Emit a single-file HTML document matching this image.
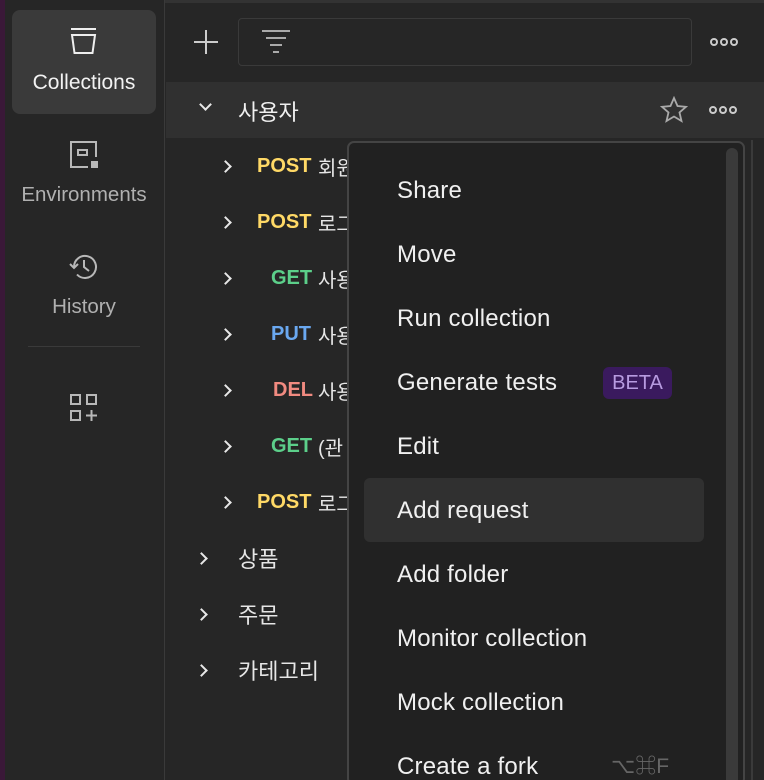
<!DOCTYPE html><html><head><meta charset="utf-8"><style>
*{margin:0;padding:0;box-sizing:border-box}
html{width:764px;height:780px;overflow:hidden}
body{width:764px;height:780px;overflow:hidden;background:#262626;font-family:"Liberation Sans","Noto Sans CJK KR",sans-serif;color:#e6e6e6;position:relative}
.a{position:absolute}
.strip{left:0;top:0;width:5px;height:780px;background:#3a1838}
.side{left:5px;top:0;width:160px;height:780px;background:#262626;border-right:1px solid #3a3a3a}
.nav{left:12px;width:144px;text-align:center;font-size:20.5px;color:#b0b0b0}
.row{left:166px;width:598px;height:56px;font-size:20px;display:flex;align-items:center}
.chev{position:absolute;width:9px;height:9px;border-right:2px solid #e8e8e8;border-bottom:2px solid #e8e8e8;transform:rotate(-45deg)}
.m{font-weight:bold;position:absolute}
.menu{left:347px;top:141px;width:398px;height:645px;background:#212121;border:2px solid #444;border-radius:7px;overflow:hidden}
.mi{position:absolute;left:48px;font-size:24px;letter-spacing:0.2px;color:#f0f0f0;height:64px;line-height:64px}
.dots{position:absolute;display:flex;gap:2px}
.dots i{width:8px;height:8px;border:2px solid #ccc;border-radius:50%}
</style></head><body>
<div class="a" style="left:0;top:0;width:764px;height:3px;background:#333"></div>
<div class="a strip"></div>
<div class="a side"></div>
<div class="a" style="left:12px;top:10px;width:144px;height:104px;background:#3a3a3a;border-radius:8px"></div>
<svg class="a" style="left:68px;top:26px" width="32" height="32" viewBox="0 0 32 32" fill="none" stroke="#eee" stroke-width="2"><path d="M3 3h25M4 9h23l-2.5 18h-18z"/></svg>
<div class="a nav" style="top:71px;color:#f2f2f2;font-size:21px">Collections</div>
<svg class="a" style="left:68px;top:139px" width="32" height="32" viewBox="0 0 32 32" fill="none" stroke="#b8b8b8" stroke-width="2"><path d="M28 18V3H3v25h17"/><rect x="10" y="11" width="9" height="5"/><rect x="24" y="23" width="5" height="5" fill="#b8b8b8"/></svg>
<div class="a nav" style="top:183px">Environments</div>
<svg class="a" style="left:68px;top:251px" width="32" height="32" viewBox="0 0 32 32" fill="none" stroke="#b8b8b8" stroke-width="2"><path d="M6 16a11 11 0 1 1 3 7.5"/><path d="M2 13l4 4 4-4"/><path d="M16 9v7l5 4"/></svg>
<div class="a nav" style="top:295px">History</div>
<div class="a" style="left:28px;top:346px;width:112px;height:1px;background:#3a3a3a"></div>
<svg class="a" style="left:68px;top:392px" width="32" height="32" viewBox="0 0 32 32" fill="none" stroke="#b8b8b8" stroke-width="2"><rect x="3" y="3" width="9" height="9"/><rect x="19" y="3" width="9" height="9"/><rect x="3" y="19" width="9" height="9"/><path d="M23.5 18v11M18 23.5h11"/></svg>
<svg class="a" style="left:193px;top:29px" width="26" height="26" viewBox="0 0 26 26" stroke="#ccc" stroke-width="2"><path d="M13 1v24M1 13h24"/></svg>
<div class="a" style="left:238px;top:18px;width:454px;height:48px;border:1px solid #3a3a3a;border-radius:4px;background:#262626"></div>
<svg class="a" style="left:260px;top:28px" width="32" height="28" viewBox="0 0 32 28" stroke="#aaa" stroke-width="2"><path d="M2 3h28M6 10h20M10 17h12M13 24h6"/></svg>
<div class="dots" style="left:710px;top:38px"><i></i><i></i><i></i></div>
<div class="a" style="left:166px;top:82px;width:598px;height:56px;background:#303030"></div>
<div class="a chev" style="left:201px;top:100px;transform:rotate(45deg)"></div>
<div class="a" style="left:238px;top:95px;font-size:22px;color:#f0f0f0">사용자</div>
<svg class="a" style="left:660px;top:96px" width="28" height="28" viewBox="0 0 28 28" fill="none" stroke="#aaa" stroke-width="1.8"><path d="M14 2l3.5 8 8.5.8-6.5 5.7 2 8.5L14 20.5 6.5 25l2-8.5L2 10.8l8.5-.8z"/></svg>
<div class="dots" style="left:709px;top:106px"><i></i><i></i><i></i></div>

<div class="a row" style="top:138px"><div class="chev" style="left:55px"></div><span class="m" style="left:91px;color:#ffd966">POST</span><span class="a" style="left:152px">회원</span></div>
<div class="a row" style="top:194px"><div class="chev" style="left:55px"></div><span class="m" style="left:91px;color:#ffd966">POST</span><span class="a" style="left:152px">로그</span></div>
<div class="a row" style="top:250px"><div class="chev" style="left:55px"></div><span class="m" style="left:105px;color:#5ccf8a">GET</span><span class="a" style="left:152px">사용</span></div>
<div class="a row" style="top:306px"><div class="chev" style="left:55px"></div><span class="m" style="left:105px;color:#6aa8f0">PUT</span><span class="a" style="left:152px">사용</span></div>
<div class="a row" style="top:362px"><div class="chev" style="left:55px"></div><span class="m" style="left:107px;color:#f08a80">DEL</span><span class="a" style="left:152px">사용</span></div>
<div class="a row" style="top:418px"><div class="chev" style="left:55px"></div><span class="m" style="left:105px;color:#5ccf8a">GET</span><span class="a" style="left:152px">(관</span></div>
<div class="a row" style="top:474px"><div class="chev" style="left:55px"></div><span class="m" style="left:91px;color:#ffd966">POST</span><span class="a" style="left:152px">로그</span></div>
<div class="a row" style="top:530px"><div class="chev" style="left:31px"></div><span class="a" style="left:72px;font-size:22px">상품</span></div>
<div class="a row" style="top:586px"><div class="chev" style="left:31px"></div><span class="a" style="left:72px;font-size:22px">주문</span></div>
<div class="a row" style="top:642px"><div class="chev" style="left:31px"></div><span class="a" style="left:72px;font-size:22px">카테고리</span></div>

<div class="a" style="left:751px;top:140px;width:2px;height:640px;background:#3a3a3a"></div>
<div class="a menu">
<div class="a" style="left:377px;top:5px;width:12px;height:660px;background:#3a3a3a;border-radius:6px"></div>
<div class="a" style="left:15px;top:335px;width:340px;height:64px;background:#303030;border-radius:6px"></div>
<div class="mi" style="top:16px">Share</div>
<div class="mi" style="top:80px">Move</div>
<div class="mi" style="top:144px">Run collection</div>
<div class="mi" style="top:208px">Generate tests</div>
<div class="a" style="left:254px;top:224px;width:69px;height:32px;background:#3a1a5e;border-radius:6px;color:#b79be0;font-size:20px;text-align:center;line-height:32px">BETA</div>
<div class="mi" style="top:272px">Edit</div>
<div class="mi" style="top:336px">Add request</div>
<div class="mi" style="top:400px">Add folder</div>
<div class="mi" style="top:464px">Monitor collection</div>
<div class="mi" style="top:528px">Mock collection</div>
<div class="mi" style="top:592px">Create a fork</div>
<div class="a" style="left:262px;top:592px;line-height:64px;font-size:21px;color:#666">⌥⌘F</div>
</div>
</body></html>
